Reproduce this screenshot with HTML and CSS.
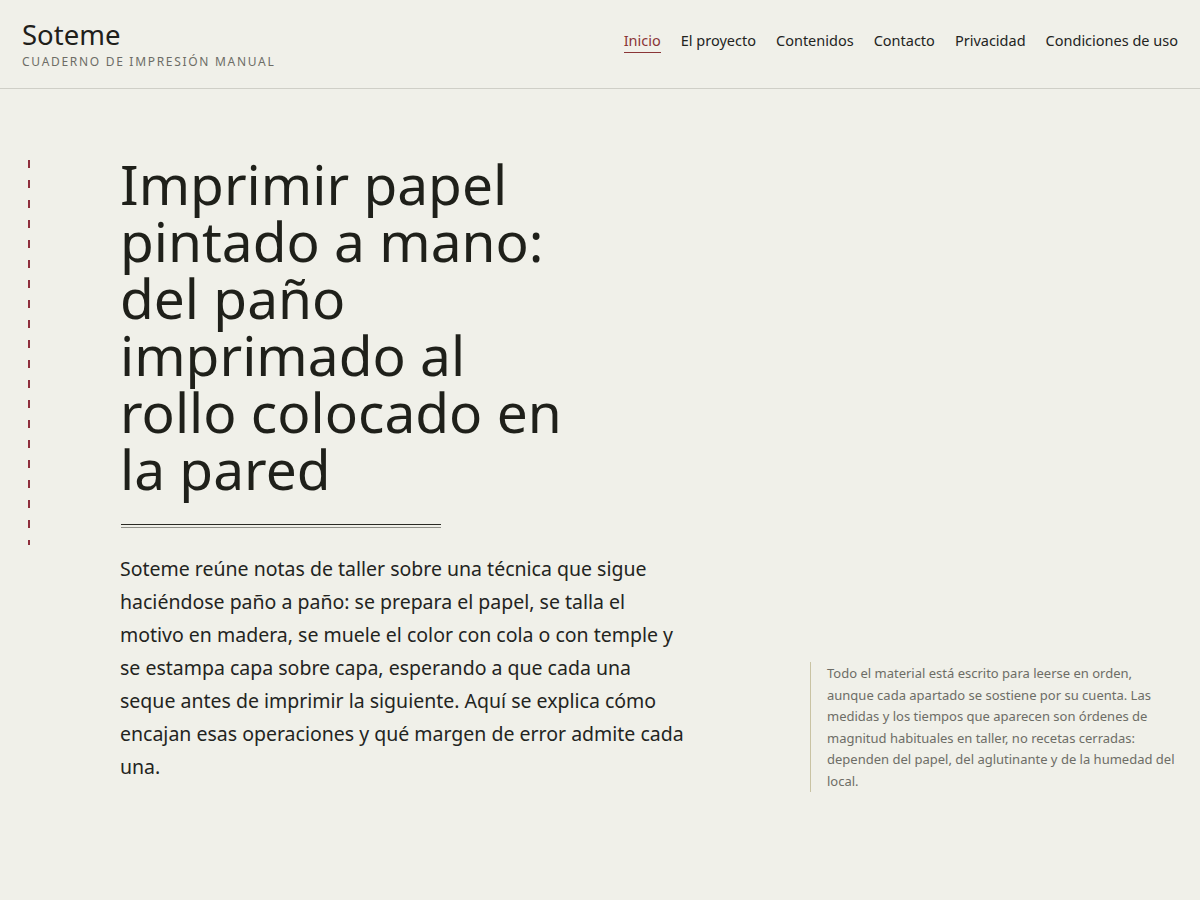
FILE: index.html
```html
<!DOCTYPE html>
<html lang="es">
<head>
<meta charset="utf-8">
<title>Soteme — Cuaderno de impresión manual</title>
<link rel="stylesheet" href="styles.css">
</head>
<body>
<header class="site-header">
  <div class="brand">
    <div class="brand-name">Soteme</div>
    <div class="brand-tag">Cuaderno de impresión manual</div>
  </div>
  <nav class="nav">
    <a class="nav-link is-active" href="#">Inicio</a>
    <a class="nav-link" href="#">El proyecto</a>
    <a class="nav-link" href="#">Contenidos</a>
    <a class="nav-link" href="#">Contacto</a>
    <a class="nav-link" href="#">Privacidad</a>
    <a class="nav-link" href="#">Condiciones de uso</a>
  </nav>
</header>
<main class="hero">
  <div class="hero-main">
    <div class="rail"></div>
    <div class="hero-head">
      <h1 class="hero-title">Imprimir papel pintado a mano: del paño imprimado al rollo colocado en la pared</h1>
      <div class="hero-rule"></div>
    </div>
    <p class="hero-lead">Soteme reúne notas de taller sobre una técnica que sigue haciéndose paño a paño: se prepara el papel, se talla el motivo en madera, se muele el color con cola o con temple y se estampa capa sobre capa, esperando a que cada una seque antes de imprimir la siguiente. Aquí se explica cómo encajan esas operaciones y qué margen de error admite cada una.</p>
  </div>
  <aside class="hero-note">
    <p>Todo el material está escrito para leerse en orden, aunque cada apartado se sostiene por su cuenta. Las medidas y los tiempos que aparecen son órdenes de magnitud habituales en taller, no recetas cerradas: dependen del papel, del aglutinante y de la humedad del local.</p>
  </aside>
</main>
</body>
</html>
```
FILE: styles.css
```css
* { box-sizing: border-box; }
html, body { margin: 0; padding: 0; }
body {
  background: #f0f0e9;
  color: #1f201a;
  font-family: "Noto Sans", "Open Sans", sans-serif;
}
.site-header {
  display: flex;
  justify-content: space-between;
  align-items: flex-start;
  height: 89px;
  padding: 17px 22px 0 22px;
  border-bottom: 1px solid #cfcfc7;
}
.brand-name {
  font-size: 27.5px;
  line-height: 36px;
  color: #1f201a;
}
.brand-tag {
  margin-top: 1px;
  font-size: 12px;
  line-height: 16px;
  letter-spacing: 1.7px;
  text-transform: uppercase;
  color: #6d6d66;
}
.nav {
  display: flex;
  gap: 20px;
  padding-top: 12px;
}
.nav-link {
  font-size: 14.5px;
  line-height: 22px;
  color: #23241e;
  text-decoration: none;
  padding-bottom: 1px;
  border-bottom: 1px solid transparent;
}
.nav-link.is-active {
  color: #8a3536;
  border-bottom-color: #8a3536;
}
.hero {
  display: grid;
  grid-template-columns: 1fr 368px;
  column-gap: 40px;
  padding: 66px 22px 0 28px;
}
.hero-main {
  display: grid;
  grid-template-columns: 2px minmax(0, 570px);
  column-gap: 90px;
}
.rail {
  grid-row: 1;
  grid-column: 1;
  margin-top: 5px;
  height: 385px;
  background: repeating-linear-gradient(to bottom, #8f2f3c 0 8px, transparent 8px 20px);
}
.hero-head {
  grid-row: 1;
  grid-column: 2;
}
.hero-title {
  margin: 0;
  max-width: 460px;
  font-size: 55px;
  line-height: 57px;
  font-weight: 400;
  color: #1f201a;
}
.hero-rule {
  margin-top: 27px;
  margin-left: 1px;
  width: 320px;
  height: 4px;
  border-top: 1px solid #2a2a24;
  border-bottom: 1px solid #8f8f88;
}
.hero-lead {
  grid-row: 2;
  grid-column: 2;
  margin: 7px 0 9px 0;
  font-size: 19.5px;
  line-height: 33px;
  color: #23241e;
}
.hero-note {
  align-self: end;
  border-left: 1px solid #c9c3a3;
  padding: 1px 0 0 16px;
}
.hero-note p {
  margin: 0;
  font-size: 13px;
  line-height: 21.5px;
  color: #6d6d66;
}
```
